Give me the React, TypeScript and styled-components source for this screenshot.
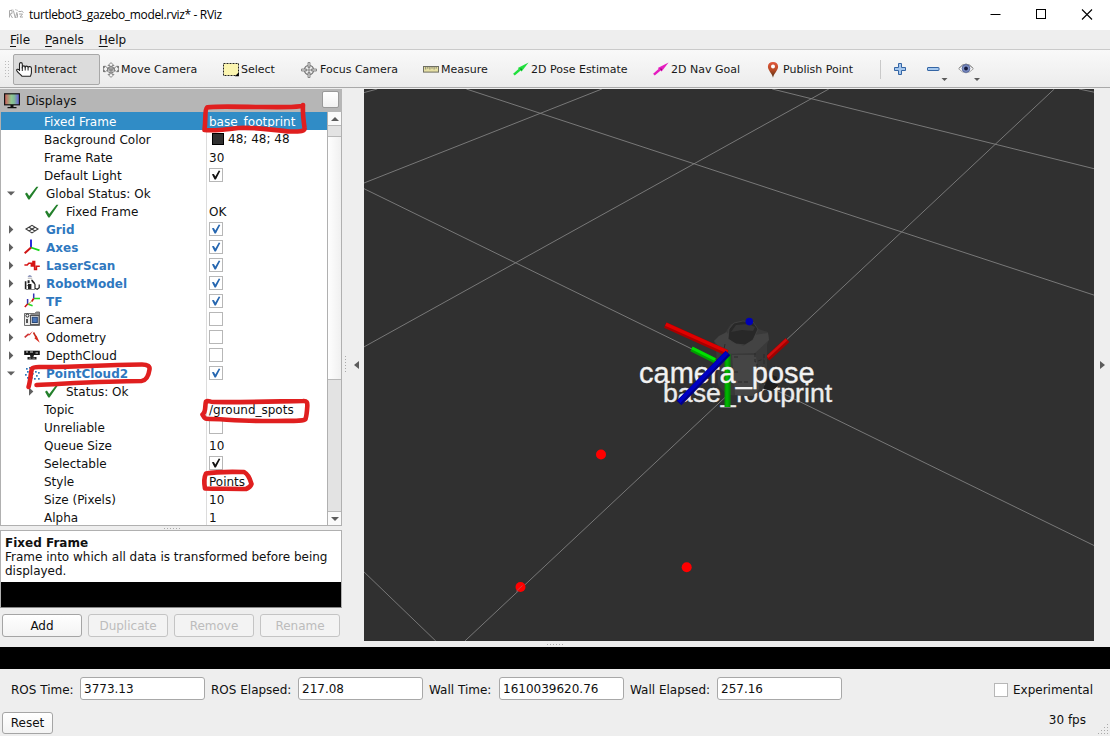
import React from 'react';
import styled, { createGlobalStyle } from 'styled-components';

const GlobalStyle = createGlobalStyle`
  * { box-sizing: border-box; }
  body { margin: 0; background: #eeeeee; }
  svg { display: block; flex: none; }
`;

const Window = styled.div`
  position: relative;
  display: flex;
  flex-direction: column;
  width: 1110px;
  height: 736px;
  overflow: hidden;
  background: #eeeeee;
  color: #101010;
  font: 12px/18px 'DejaVu Sans', sans-serif;
  white-space: nowrap;
`;

const TitleBar = styled.header`
  display: flex;
  align-items: center;
  height: 30px;
  flex: none;
  padding-left: 8px;
  background: #ffffff;
`;

const Title = styled.span`
  flex: 1;
  margin-left: 5px;
  font: 12px/30px 'Open Sans', sans-serif;
  letter-spacing: -0.34px;
  color: #000;
`;

const WindowButtons = styled.div`
  display: flex;
`;

const WindowButton = styled.button`
  display: grid;
  place-items: center;
  width: 46px;
  height: 30px;
  padding: 0;
  border: 0;
  background: none;
`;

const MenuBar = styled.nav`
  display: flex;
  gap: 15px;
  height: 20px;
  flex: none;
  padding-left: 10px;
  border-bottom: 1px solid #cacaca;
  line-height: 20px;
`;

const MenuItem = styled.span`
  u { text-underline-offset: 2px; }
`;

const ToolBar = styled.div`
  display: flex;
  align-items: center;
  height: 38px;
  flex: none;
  padding: 2px 0 0 5px;
  background: linear-gradient(#f9f9f9, #ececec);
  border-bottom: 1px solid #a9a9a9;
  font-size: 11px;
`;

const Tool = styled.button<{ $width: number; $gap?: number; $active?: boolean }>`
  display: flex;
  align-items: center;
  gap: ${p => p.$gap ?? 2}px;
  width: ${p => p.$width}px;
  height: 31px;
  padding: 0 0 0 2px;
  border: 1px solid ${p => (p.$active ? '#a8a8a8' : 'transparent')};
  border-radius: 2px;
  background: ${p => (p.$active ? '#dcdcdc' : 'none')};
  color: #181818;
  font: inherit;
  white-space: nowrap;
`;

const Separator = styled.div`
  width: 1px;
  height: 19px;
  margin-right: 13px;
  background: #c9c9c9;
`;

const IconTool = styled.div<{ $width: number }>`
  width: ${p => p.$width}px;
`;

const Workspace = styled.main`
  display: flex;
  height: 559px;
  flex: none;
  padding-top: 1px;
`;

const Dock = styled.section`
  display: flex;
  flex-direction: column;
  width: 342px;
`;

const DockTitle = styled.div`
  display: flex;
  align-items: center;
  gap: 6px;
  height: 23px;
  padding: 0 3px 0 4px;
  background: #b6b6b6;
`;

const DockLabel = styled.span`
  flex: 1;
  padding-top: 1px;
`;

const DockButton = styled.button`
  width: 17px;
  height: 17px;
  padding: 0;
  margin-bottom: 3px;
  border: 1px solid #999;
  border-radius: 2px;
  background: linear-gradient(#fff, #f1f1f1);
`;

const TreeFrame = styled.div`
  display: flex;
  height: 414px;
  border: 1px solid #b0b0b0;
  border-top: 0;
  background: #fff;
`;

const Tree = styled.div`
  flex: 1;
  overflow: hidden;
`;

const Row = styled.div<{ $selected?: boolean }>`
  display: flex;
  height: 18px;
  background: ${p => (p.$selected ? '#308cc6' : '#fff')};
  color: ${p => (p.$selected ? '#fff' : '#101010')};
`;

const NameCell = styled.div<{ $level: number; $bold?: boolean; $selected?: boolean }>`
  display: flex;
  align-items: center;
  width: 206px;
  padding-left: ${p => p.$level}px;
  border-right: 1px solid ${p => (p.$selected ? '#308cc6' : '#dcdcdc')};
  ${p => p.$bold && 'font-weight: bold; color: #2f78bf;'}
`;

const RowIcon = styled.span`
  width: 16px;
  margin-right: 6px;
`;

const Expander = styled.span<{ $space: number }>`
  display: grid;
  place-items: center;
  width: 8px;
  height: 18px;
  margin-right: ${p => p.$space}px;
`;

const Label = styled.span`
  padding-top: 1px;
`;

const ValueCell = styled.div`
  display: flex;
  align-items: center;
  gap: 4px;
  padding-left: 2px;
`;

const Swatch = styled.span`
  width: 12px;
  height: 12px;
  margin-left: 3px;
  border: 1px solid #000;
  background: #303030;
`;

const SwatchText = styled.span`
  padding-bottom: 1px;
`;

const Box = styled.span`
  display: grid;
  place-items: center;
  width: 14px;
  height: 14px;
  border: 1px solid #b7b7b7;
  background: #fff;
`;

const ScrollBar = styled.div`
  display: flex;
  flex-direction: column;
  width: 14px;
  border-left: 1px solid #b0b0b0;
  background: #e3e3e3;
`;

const ScrollButton = styled.div<{ $edge: 'top' | 'bottom' }>`
  display: grid;
  place-items: center;
  height: 14px;
  background: #fafafa;
  border-${p => (p.$edge === 'top' ? 'bottom' : 'top')}: 1px solid #b8b8b8;
`;

const ScrollHandle = styled.div`
  height: 244px;
  margin: 10px 0 auto;
  border: 1px solid #b8b8b8;
  border-width: 1px 0;
  background: linear-gradient(90deg, #fefefe, #f0f0f0);
`;

const Splitter = styled.div<{ $height: number; $offset?: number }>`
  display: flex;
  align-items: center;
  justify-content: center;
  height: ${p => p.$height}px;
  padding-left: ${p => p.$offset ?? 0}px;
`;

const Help = styled.div`
  height: 78px;
  border: 1px solid #b0b0b0;
  border-bottom-color: #888;
  background: linear-gradient(#fff 51px, #000 51px);
  padding: 5px 4px 0;
  line-height: 14px;
`;

const ButtonRow = styled.div`
  display: flex;
  gap: 6px;
  padding: 6px 2px 0;
`;

const PushButton = styled.button<{ $width: number; $height?: number }>`
  width: ${p => p.$width}px;
  height: ${p => p.$height ?? 23}px;
  padding: 0;
  border: 1px solid #a5a5a5;
  border-radius: 3px;
  background: linear-gradient(#ffffff, #f3f3f3);
  color: #101010;
  font: inherit;
  &:disabled { color: #bcbcbc; border-color: #c4c4c4; background: #f3f3f3; }
`;

const SideHandle = styled.div<{ $width: number; $inset: number }>`
  display: flex;
  align-items: center;
  justify-content: flex-end;
  gap: 8px;
  width: ${p => p.$width}px;
  height: 552px;
  padding-right: ${p => p.$inset}px;
`;

const SceneColumn = styled.div`
  width: 730px;
`;

const BlackBand = styled.div`
  height: 22px;
  flex: none;
  background: #000;
`;

const TimePanel = styled.footer`
  flex: 1;
`;

const TimeRow = styled.div`
  display: flex;
  align-items: center;
  height: 40px;
  padding: 0 17px 0 11px;
`;

const TimeLabel = styled.label<{ $width: number }>`
  width: ${p => p.$width}px;
  padding-top: 1px;
`;

const TimeField = styled.div<{ $gap: number }>`
  width: 125px;
  height: 23px;
  margin: 0 ${p => p.$gap}px 1px 0;
  padding-left: 3px;
  border: 1px solid #a8a8a8;
  border-radius: 3px;
  background: #fff;
  line-height: 22px;
`;

const Experimental = styled.label`
  display: flex;
  align-items: center;
  gap: 5px;
  margin-left: auto;
  padding-top: 1px;
`;

const StatusRow = styled.div`
  display: flex;
  justify-content: space-between;
  align-items: flex-start;
  padding: 2px 0 0 2px;
`;

const Status = styled.div`
  display: flex;
  align-items: flex-start;
`;

const Grip = styled.div`
  padding: 13px 0 0 12px;
`;

const ResetWrap = styled.div`
  padding-top: 1px;
`;

const Annotations = styled.svg`
  position: absolute;
  left: 0;
  top: 0;
  pointer-events: none;
`;

const Svg16 = ({ children }: { children: React.ReactNode }) => (
  <svg width="16" height="16" viewBox="0 0 16 16" fill="none">{children}</svg>
);

const MoveIcon = () => (
  <Svg16>
    <g stroke="#7b7b7b" strokeWidth=".9">
      <path d="M8 .6 5 3.600h2v8.800H5l3 3 3-3H9V3.600h2z" fill="#f6f6f6" />
      <path d="M.6 4.300h2.200l1.700 1.900h7l1.700-1.900h2.200v5.400h-1.800L11.500 8h-7L2.400 9.700H.6z" fill="#f2f2f2" />
      <path d="M4.500 6.200 8 4.300l3.500 1.900v3.200L8 11.300 4.500 9.400zM4.500 6.200 8 8l3.500-1.800M8 8v3.300" />
    </g>
    <path d="M.2 4.200h1.600v1.500H.2zM14.200 4.200h1.600v1.500h-1.600zM.2 8.300h1.600v1.500H.2zM14.200 8.300h1.600v1.500h-1.600z" fill="#666" />
  </Svg16>
);

const HandIcon = () => (
  <Svg16>
    <path
      d="M3.500 9V2C3.500.2 6.300.2 6.300 2v4.500V5c.4-1.500 2.500-1.500 2.900 0 .5-1.200 2.500-1.100 2.900.2.700-1 3.200-.8 3.300 1v4.300c0 1.800-.6 2.600-1 3.800H6C5 12.500 2.500 11.600.8 8.800c-.6-1.600 1.100-2.300 2.700-.6z"
      fill="#fff"
      stroke="#222"
      strokeWidth="1.100"
    />
    <path d="M6.300 5v4M9.200 5v3.500M12.100 5.300v3.200" stroke="#222" />
  </Svg16>
);

const SelectIcon = () => (
  <Svg16>
    <rect x=".5" y="1.500" width="15" height="12" fill="#fbf5b0" stroke="#222" strokeDasharray="2 1" />
    <path d="M15.900 10.200v4h-4z" fill="#000" />
  </Svg16>
);

const FocusIcon = () => (
  <Svg16>
    <circle cx="8" cy="8" r="4.600" fill="#eee" stroke="#777" strokeWidth="1.400" />
    <g stroke="#888">
      <path d="M7 .5h2v5H7zM7 10.500h2v5H7zM.5 7h5v2h-5zM10.500 7h5v2h-5z" fill="#ddd" />
      <path d="M8 4v8M4 8h8" />
    </g>
  </Svg16>
);

const RulerIcon = () => (
  <Svg16>
    <rect x=".5" y="4.500" width="15" height="5.600" fill="#e6e0a4" stroke="#6e6e62" />
    <path d="M2.700 5v2.500M4.800 5v1.700M6.900 5v2.500M9 5v1.700M11.100 5v2.500M13.200 5v1.700" stroke="#6e6e62" strokeWidth=".8" />
  </Svg16>
);

const ArrowIcon = ({ color, dark }: { color: string; dark: string }) => (
  <Svg16>
    <path d="m.9 12.700 6-5.200" stroke={color} strokeWidth="2.400" />
    <path d="M15.600.5 4.800 6.100 8.600 9.500z" fill={color} />
    <path d="m6.600 6.400 1.900 2.300.6-1.900z" fill={dark} />
  </Svg16>
);

const PinIcon = () => (
  <Svg16>
    <defs>
      <linearGradient id="pin" x2="0" y2="1">
        <stop stopColor="#e2583c" />
        <stop offset=".5" stopColor="#b84a26" />
        <stop offset="1" stopColor="#4e3012" />
      </linearGradient>
    </defs>
    <path d="M8 0C4.800 0 2.900 2 2.900 4.800 2.900 8.400 7 11.200 8 15.800c1-4.600 5.100-7.400 5.100-11C13.100 2 11.200 0 8 0z" fill="url(#pin)" />
    <circle cx="8" cy="4.500" r="2" fill="#fff" />
  </Svg16>
);

const PlusIcon = () => (
  <Svg16>
    <path d="M4.500 1.500h3v4h4v3h-4v4h-3v-4h-4v-3h4z" fill="#a6c8ee" stroke="#3465a4" />
  </Svg16>
);

const DropArrow = () => <path d="M14.500 19h6l-3 3z" fill="#5a5a5a" />;

const MinusIcon = () => (
  <svg width="22" height="22" viewBox="0 0 22 22">
    <rect x=".5" y="8.500" width="11.500" height="3" rx=".5" fill="#a6c8ee" stroke="#3465a4" />
    <DropArrow />
  </svg>
);

const EyeIcon = () => (
  <svg width="23" height="22" viewBox="0 0 23 22">
    <path d="M.5 9.700Q8 .5 15.500 9.700Q8 18 .5 9.700z" fill="#f6f6f6" stroke="#aaa" />
    <path d="M1 9.200Q8 1 15 9.200" fill="none" stroke="#888" />
    <circle cx="8" cy="9.500" r="3.900" fill="#7d8fc4" stroke="#4a5b94" strokeWidth=".8" />
    <circle cx="8" cy="9.500" r="1.900" fill="#14183c" />
    <g transform="translate(1.500 0)"><DropArrow /></g>
  </svg>
);

const OkIcon = () => (
  <Svg16>
    <path d="M1 8.800 2.900 7.600 5.200 11 12.400 1.800 14.400 1.800 5.600 14.400 4.300 14.400z" fill="#23802b" />
  </Svg16>
);

const GridIcon = () => (
  <Svg16>
    <path d="M2 8 8 4.300 14 8l-6 3.900zM5 6.200l6 3.800M11 6.200 5 10" stroke="#3c3c3c" strokeWidth="1.100" />
  </Svg16>
);

const AxesIcon = () => (
  <Svg16>
    <path d="M7 8.500V.5" stroke="#1414d8" strokeWidth="1.800" />
    <path d="m7 8.500 8.500 2.900" stroke="#19d419" strokeWidth="1.800" />
    <path d="m7 8.500-6.300 5.800" stroke="#d01414" strokeWidth="2" />
  </Svg16>
);

const LaserIcon = () => (
  <Svg16>
    <path d="M.4 8h2.800l1.600-1.700h2.600V9H9V4.500h1.600v8h1.800V9.200h3.400" stroke="#d61414" strokeWidth="1.600" />
  </Svg16>
);

const RobotIcon = () => (
  <Svg16>
    <path d="M3.500 1.600Q5.800-.4 8.200 1.600z" fill="#27357c" />
    <path d="M3.800 3.200h4.400" stroke="#b0b0b0" />
    <path d="M.8 6.200h1.600v8H.8zM3.600 5.200h2v3h-2zM4 9h3.400v5.500H4zM7 4.800h1.600l2 2.600-1.200 1-1.600-1.600z" fill="#222" />
    <path d="m9.600 7 1.400 2.400v4l2.200.9 2-1.500V9.600M9 14.500h1.800" stroke="#222" strokeWidth="1.200" />
    <path d="M2.500 10.500h1.500M2 14.500h9" stroke="#888" />
  </Svg16>
);

const TfIcon = () => (
  <Svg16>
    <path d="M9.700.5v5M3.600 6v5.500" stroke="#3434b4" strokeWidth="1.500" />
    <path d="m10 5.500 6 0M3.600 11l5 1.700" stroke="#22d822" strokeWidth="1.500" />
    <path d="m9.700 5.500-2 3M3.600 11l-2.800 3" stroke="#d01414" strokeWidth="1.600" />
    <path d="M7.700 8 4 11.500" stroke="#c79c26" />
  </Svg16>
);

const CameraIcon = () => (
  <Svg16>
    <path d="M.5 2.500h10l2-1.500h3v13.500H.5z" fill="#8a8a8a" stroke="#707070" />
    <path d="M1 3h5.500v11H1z" fill="#eee" />
    <circle cx="3.400" cy="4.600" r="1.500" fill="#fff" stroke="#222" />
    <path d="M2 8h2v4H2z" fill="#555" />
    <rect x="6.500" y="4.500" width="8.500" height="9" fill="#ddd" stroke="#555" />
    <rect x="8.300" y="6.300" width="5" height="5.200" fill="#4a75b8" stroke="#284878" />
  </Svg16>
);

const OdometryIcon = () => (
  <Svg16>
    <path d="m.7 8.300 4-3.500" stroke="#c33" strokeWidth="1.600" />
    <path d="m3.800 6.300 5.100-4.300-3.100 4.300z" fill="#d33" />
    <path d="m9.500 3.500 2.400 4.300" stroke="#c42a1a" strokeWidth="1.600" />
    <path d="m12.500 6.500 3.300 7.200-5.400-4.500z" fill="#d62a1a" />
  </Svg16>
);

const DepthIcon = () => (
  <Svg16>
    <path d="M.2 3.700h15.600V8H.2z" fill="#151515" />
    <path d="M2 5h2M6 5h3M11.500 6h2.500" stroke="#ddd" />
    <path d="M6 8h4l-.6 2h-3zM3.500 10h9v2.500h-9z" fill="#222" />
    <path d="M5 11.200h2M8.500 11.200H11" stroke="#aaa" strokeWidth=".7" />
  </Svg16>
);

const CLOUD_DOTS = [[2, 3], [5, 2], [9, 3], [13, 2], [3, 6], [7, 5], [11, 6], [14, 7], [1, 9], [5, 9], [8, 8], [12, 10], [3, 12], [7, 12], [10, 13], [14, 13]];

const CloudIcon = () => (
  <Svg16>
    {CLOUD_DOTS.map(([x, y]) => <rect key={`${x}-${y}`} x={x} y={y} width="1.700" height="1.700" fill="#2b78bd" />)}
  </Svg16>
);

const MonitorIcon = () => (
  <svg width="16" height="16" viewBox="0 0 16 16">
    <defs>
      <linearGradient id="screen">
        <stop stopColor="#d05858" />
        <stop offset=".45" stopColor="#90c890" />
        <stop offset=".65" stopColor="#80b898" />
        <stop offset="1" stopColor="#6a5ae0" />
      </linearGradient>
    </defs>
    <rect x=".6" y=".8" width="14.800" height="11" fill="url(#screen)" stroke="#151515" strokeWidth="1.200" />
    <path d="M6.500 12h3v2h-3zM3.500 14h9v1.300h-9z" fill="#111" />
  </svg>
);

const AppIcon = () => (
  <svg width="16" height="16" viewBox="0 0 16 16" fill="none" stroke="#a8a8a8">
    <path d="M1.500 3.500v7M1.500 3.500h2.500v3l-2 .5 2.500 4M5.500 4l1.800 7 1.700-6M9.500 6.500v4M10.500 4.500h3M11 7h3.500l-2.500 3h3M13.500 4l2 1.500" />
    <path d="M3.500 2.500 6 3.500M8 10.500h2M7 2.500l3 1" stroke="#ccc" />
  </svg>
);

const Tick = ({ color }: { color: string }) => (
  <svg width="12" height="12" viewBox="0 0 12 12">
    <path d="M1.900 5.300 3.900 4.900 5.300 7.600 8.800 1.500 10.300 1.900 5.900 10.500 4.600 10.500z" fill={color} />
  </svg>
);

const Dots = ({ vertical }: { vertical?: boolean }) =>
  vertical ? (
    <svg width="1" height="18" viewBox="0 0 1 18"><path d="M.5 0v18" stroke="#aaa" strokeDasharray="1 2" /></svg>
  ) : (
    <svg width="18" height="1" viewBox="0 0 18 1"><path d="M0 .5h18" stroke="#aaa" strokeDasharray="1 2" /></svg>
  );

type Item = {
  name: string;
  indent?: 'status';
  open?: boolean;
  expandable?: boolean;
  icon?: React.ReactNode;
  bold?: boolean;
  selected?: boolean;
  value?: string;
  swatch?: boolean;
  check?: boolean;
};

const ITEMS: Item[] = [
  { name: 'Fixed Frame', value: 'base_footprint', selected: true },
  { name: 'Background Color', value: '48; 48; 48', swatch: true },
  { name: 'Frame Rate', value: '30' },
  { name: 'Default Light', check: true },
  { name: 'Global Status: Ok', icon: <OkIcon />, expandable: true, open: true },
  { name: 'Fixed Frame', icon: <OkIcon />, indent: 'status', value: 'OK' },
  { name: 'Grid', icon: <GridIcon />, expandable: true, bold: true, check: true },
  { name: 'Axes', icon: <AxesIcon />, expandable: true, bold: true, check: true },
  { name: 'LaserScan', icon: <LaserIcon />, expandable: true, bold: true, check: true },
  { name: 'RobotModel', icon: <RobotIcon />, expandable: true, bold: true, check: true },
  { name: 'TF', icon: <TfIcon />, expandable: true, bold: true, check: true },
  { name: 'Camera', icon: <CameraIcon />, expandable: true, check: false },
  { name: 'Odometry', icon: <OdometryIcon />, expandable: true, check: false },
  { name: 'DepthCloud', icon: <DepthIcon />, expandable: true, check: false },
  { name: 'PointCloud2', icon: <CloudIcon />, expandable: true, open: true, bold: true, check: true },
  { name: 'Status: Ok', icon: <OkIcon />, indent: 'status', expandable: true },
  { name: 'Topic', value: '/ground_spots' },
  { name: 'Unreliable', check: false },
  { name: 'Queue Size', value: '10' },
  { name: 'Selectable', check: true },
  { name: 'Style', value: 'Points' },
  { name: 'Size (Pixels)', value: '10' },
  { name: 'Alpha', value: '1' },
];

const levelOf = (item: Item) => {
  if (!item.expandable) return 43;
  return item.indent === 'status' ? 26 : 6;
};

const TreeRow = ({ item }: { item: Item }) => (
  <Row $selected={item.selected}>
    <NameCell $level={levelOf(item)} $bold={item.bold} $selected={item.selected}>
      {item.expandable && (
        <Expander $space={9}>
          <svg width="8" height="9" viewBox="0 0 8 9">
            <path d={item.open ? 'M0 2.500h8L4 6.500z' : 'M2 .3 6.300 4.500 2 8.700z'} fill="#606060" />
          </svg>
        </Expander>
      )}
      {item.icon && <RowIcon>{item.icon}</RowIcon>}
      <Label>{item.name}</Label>
    </NameCell>
    <ValueCell>
      {item.swatch && <Swatch />}
      {item.value && (item.swatch ? <SwatchText>{item.value}</SwatchText> : <Label>{item.value}</Label>)}
      {item.check !== undefined && <Box>{item.check && <Tick color={item.bold ? '#2566b0' : '#111'} />}</Box>}
    </ValueCell>
  </Row>
);

const TOOLS: { label: string; width: number; gap?: number; icon: React.ReactNode; active?: boolean }[] = [
  { label: 'Interact', width: 87, icon: <HandIcon />, active: true },
  { label: 'Move Camera', width: 120, icon: <MoveIcon /> },
  { label: 'Select', width: 78, icon: <SelectIcon /> },
  { label: 'Focus Camera', width: 122, gap: 3, icon: <FocusIcon /> },
  { label: 'Measure', width: 90, icon: <RulerIcon /> },
  { label: '2D Pose Estimate', width: 140, icon: <ArrowIcon color="#1fe03c" dark="#0d8a22" /> },
  { label: '2D Nav Goal', width: 112, icon: <ArrowIcon color="#e61cc0" dark="#8a0a74" /> },
  { label: 'Publish Point', width: 118, icon: <PinIcon /> },
];

const Grabber = styled.div`
  width: 8px;
`;

const GRID_LINES = [
  [102.3, 0, 730, 206.1],
  [408.2, 0, 730, 79.7],
  [0, 99.7, 730, 456.5],
  [0, 94, 237.9, 0],
  [0, 257.9, 464.8, 0],
  [100.9, 552, 690.3, 0],
  [0, 482.9, 71.8, 552],
  [0, 3.6, 13.3, 0],
  [715, 0, 730, 3.2],
];

const POINTS = [[601, 454.5], [686.7, 567.3], [520.5, 587]];

const Scene = () => (
  <svg width="730" height="552" viewBox="364 89 730 552">
    <rect x="364" y="89" width="730" height="552" fill="#303030" />
    <g transform="translate(364 89)" stroke="#808080" strokeWidth=".9">
      {GRID_LINES.map(([x1, y1, x2, y2], i) => <line key={i} x1={x1} y1={y1} x2={x2} y2={y2} />)}
    </g>
    {POINTS.map(([x, y]) => <circle key={x} cx={x} cy={y} r="5" fill="#ff0000" />)}
    <path d="m516 591.500 6.500-6" stroke="#b06060" strokeWidth=".7" />
    <g strokeWidth="5.400">
      <path d="m691.500 348.800 24 12" stroke="#00a000" />
      <path d="m692 348 23 11.500" stroke="#00e000" strokeWidth="3" />
      <path d="m787.500 340-20 18.500" stroke="#a00000" />
      <path d="m786.500 339.500-19 17.500" stroke="#cf0c0c" strokeWidth="2.400" />
    </g>
    <text x="663" y="401.500" fontFamily="Liberation Sans, sans-serif" fontSize="26.700" fill="#ececec" stroke="#ececec" strokeWidth=".35">base_footprint</text>
    <path d="m770 374 7 3 1 9-6 5-9-2z" fill="#1c1c1c" />
    <path d="m714 341 5-5 6-3 6-9 9-2 12 1 6 6 10 3 1 7-2 6v34l-5 12-14 5-21-1-9-10-2-36z" fill="#393939" />
    <path d="m714 341 5-5 8-4 5 10 12 4 10-11 14-2 1 7-14 13-30 1z" fill="#434343" />
    <path d="m732 355 24 0 3 34-6 7-18-1z" fill="#454545" />
    <path d="m729 329 5-6 9-2 10 1 5 7-5 11-8 5-9-1-8-5z" fill="#282828" stroke="#484848" strokeWidth=".7" />
    <path d="m731 332 11-2 11 1 2-4-7-3-12 1z" fill="#363636" />
    <path d="M755 353v9l9-3M734 357h5m-5 15h6m17-8v12m7-22v10M738 382h12M725 344l-2 11" stroke="#2b2b2b" strokeWidth="1" fill="none" strokeDasharray="4 2" />
    <circle cx="749.300" cy="321.600" r="3.800" fill="#0000b4" />
    <path d="M727.500 354v53" stroke="#009400" strokeWidth="6" />
    <path d="M727 356v51" stroke="#00b400" strokeWidth="3" />
    <text x="639" y="382.500" fontFamily="Liberation Sans, sans-serif" fontSize="29" fill="#f2f2f2" stroke="#f2f2f2" strokeWidth=".35">camera_pose</text>
    <path d="m665.300 325 62 28" stroke="#a80000" strokeWidth="6" />
    <path d="m665.800 324.300 61.500 27.500" stroke="#e00000" strokeWidth="3.400" />
    <path d="m728 353-49 50" stroke="#000088" strokeWidth="6.600" />
    <path d="m727 352.700-48 49" stroke="#0000c4" strokeWidth="3.800" />
  </svg>
);

const TIMES = [
  { label: 'ROS Time:', value: '3773.13', width: 69, gap: 6 },
  { label: 'ROS Elapsed:', value: '217.08', width: 87, gap: 6 },
  { label: 'Wall Time:', value: '1610039620.76', width: 70, gap: 6 },
  { label: 'Wall Elapsed:', value: '257.16', width: 87, gap: 0 },
];

export default function App() {
  return (
    <Window>
      <GlobalStyle />
      <TitleBar>
        <AppIcon />
        <Title>turtlebot3_gazebo_model.rviz* - RViz</Title>
        <WindowButtons>
          <WindowButton><svg width="10" height="10" viewBox="-1 0 10 10" overflow="visible"><path d="M-.5 4.500h10" stroke="#000" /></svg></WindowButton>
          <WindowButton><svg width="10" height="10" overflow="visible"><rect x=".5" y="-.5" width="9" height="9" fill="none" stroke="#000" /></svg></WindowButton>
          <WindowButton><svg width="10" height="10" overflow="visible"><path d="m0-.5 10 10M10-.5 0 9.500" stroke="#000" strokeWidth="1.100" /></svg></WindowButton>
        </WindowButtons>
      </TitleBar>
      <MenuBar>
        <MenuItem><u>F</u>ile</MenuItem>
        <MenuItem><u>P</u>anels</MenuItem>
        <MenuItem><u>H</u>elp</MenuItem>
      </MenuBar>
      <ToolBar>
        <Grabber>
          <svg width="5" height="18" viewBox="0 0 5 18">
            <path d="M.5 0v18M3.500 0v18" stroke="#bbb" strokeDasharray="1 2" />
          </svg>
        </Grabber>
        {TOOLS.map(t => (
          <Tool key={t.label} $width={t.width} $gap={t.gap} $active={t.active}>
            {t.icon}
            <span>{t.label}</span>
          </Tool>
        ))}
        <Separator />
        <IconTool $width={33}><PlusIcon /></IconTool>
        <IconTool $width={31}><MinusIcon /></IconTool>
        <EyeIcon />
      </ToolBar>
      <Workspace>
        <Dock>
          <DockTitle>
            <MonitorIcon />
            <DockLabel>Displays</DockLabel>
            <DockButton />
          </DockTitle>
          <TreeFrame>
            <Tree>{ITEMS.map((item, i) => <TreeRow key={i} item={item} />)}</Tree>
            <ScrollBar>
              <ScrollButton $edge="top"><svg width="8" height="4"><path d="M0 4h8L4 0z" fill="#5c5c5c" /></svg></ScrollButton>
              <ScrollHandle />
              <ScrollButton $edge="bottom"><svg width="8" height="4"><path d="M0 0h8L4 4z" fill="#5c5c5c" /></svg></ScrollButton>
            </ScrollBar>
          </TreeFrame>
          <Splitter $height={4} $offset={3}><Dots /></Splitter>
          <Help>
            <b>Fixed Frame</b><br />
            Frame into which all data is transformed before being<br />
            displayed.
          </Help>
          <ButtonRow>
            <PushButton $width={80}>Add</PushButton>
            <PushButton $width={80} disabled>Duplicate</PushButton>
            <PushButton $width={80} disabled>Remove</PushButton>
            <PushButton $width={80} disabled>Rename</PushButton>
          </ButtonRow>
        </Dock>
        <SideHandle $width={22} $inset={5}>
          <Dots vertical />
          <svg width="5" height="8"><path d="M5 0v8L0 4z" fill="#5c5c5c" /></svg>
        </SideHandle>
        <SceneColumn>
          <Scene />
          <Splitter $height={6}><svg width="364" height="1"><path d="M0 .5h18" stroke="#aaa" strokeDasharray="1 2" /></svg></Splitter>
        </SceneColumn>
        <SideHandle $width={16} $inset={5}>
          <svg width="5" height="8"><path d="M0 0v8l5-4z" fill="#5c5c5c" /></svg>
        </SideHandle>
      </Workspace>
      <BlackBand />
      <TimePanel>
        <TimeRow>
          {TIMES.map(t => (
            <React.Fragment key={t.label}>
              <TimeLabel $width={t.width}>{t.label}</TimeLabel>
              <TimeField $gap={t.gap}>{t.value}</TimeField>
            </React.Fragment>
          ))}
          <Experimental><Box />Experimental</Experimental>
        </TimeRow>
        <StatusRow>
          <ResetWrap><PushButton $width={51} $height={22}>Reset</PushButton></ResetWrap>
          <Status>
            <span>30 fps</span>
            <Grip>
              <svg width="12" height="12" viewBox="0 0 12 12">
                <path d="M9 .5h1M6 3.500h1M9 3.500h1M3 6.500h1M6 6.500h1M9 6.500h1M0 9.500h1M3 9.500h1M6 9.500h1M9 9.500h1" stroke="#aaa" />
              </svg>
            </Grip>
          </Status>
        </StatusRow>
      </TimePanel>
      <Annotations width="1110" height="736" fill="none" stroke="#e01f1f" strokeWidth="4.600" strokeLinecap="round" strokeLinejoin="round">
        <path d="M303 105c.500 2.500-20 2.200-46 2-20-.3-46-1-50 .5-2.500 2-1 11-2.500 22.500 8 1 22-.5 34-2 22-1 36 2.700 52 3.500 10 0 15-.3 14-4-1-7-2-15-1.500-22.500" />
        <path d="M28.500 387c2-6 2-14 3.500-18.500 1-1.500 3-1.500 7-1.500 36 .5 70-2.500 103-2.500 6 0 8 2 7.500 5-1 7-3 11-8 11.500-34 0-72 2.500-105 4" />
        <path d="M202.500 414.500c4-3 2-8 3.500-13 2-1.500 4 .5 7 .5 26 .5 60-.5 90-1 4-.3 4.500 1.500 4.300 5-.3 5-.5 9-1.800 13-2 2.500-16 1.700-30 2-26 .5-48-1.500-69-2.200-2 .2-2.500-2-4-4.300z" />
        <path d="M205 488.500c-1-5-1-11 1-15 8-1.500 18-2 38-1.500 5 2.500 6.500 8.500 7.500 12-1 3-3 4-5.500 5-14-.5-28 0-41-.5z" />
      </Annotations>
    </Window>
  );
}
